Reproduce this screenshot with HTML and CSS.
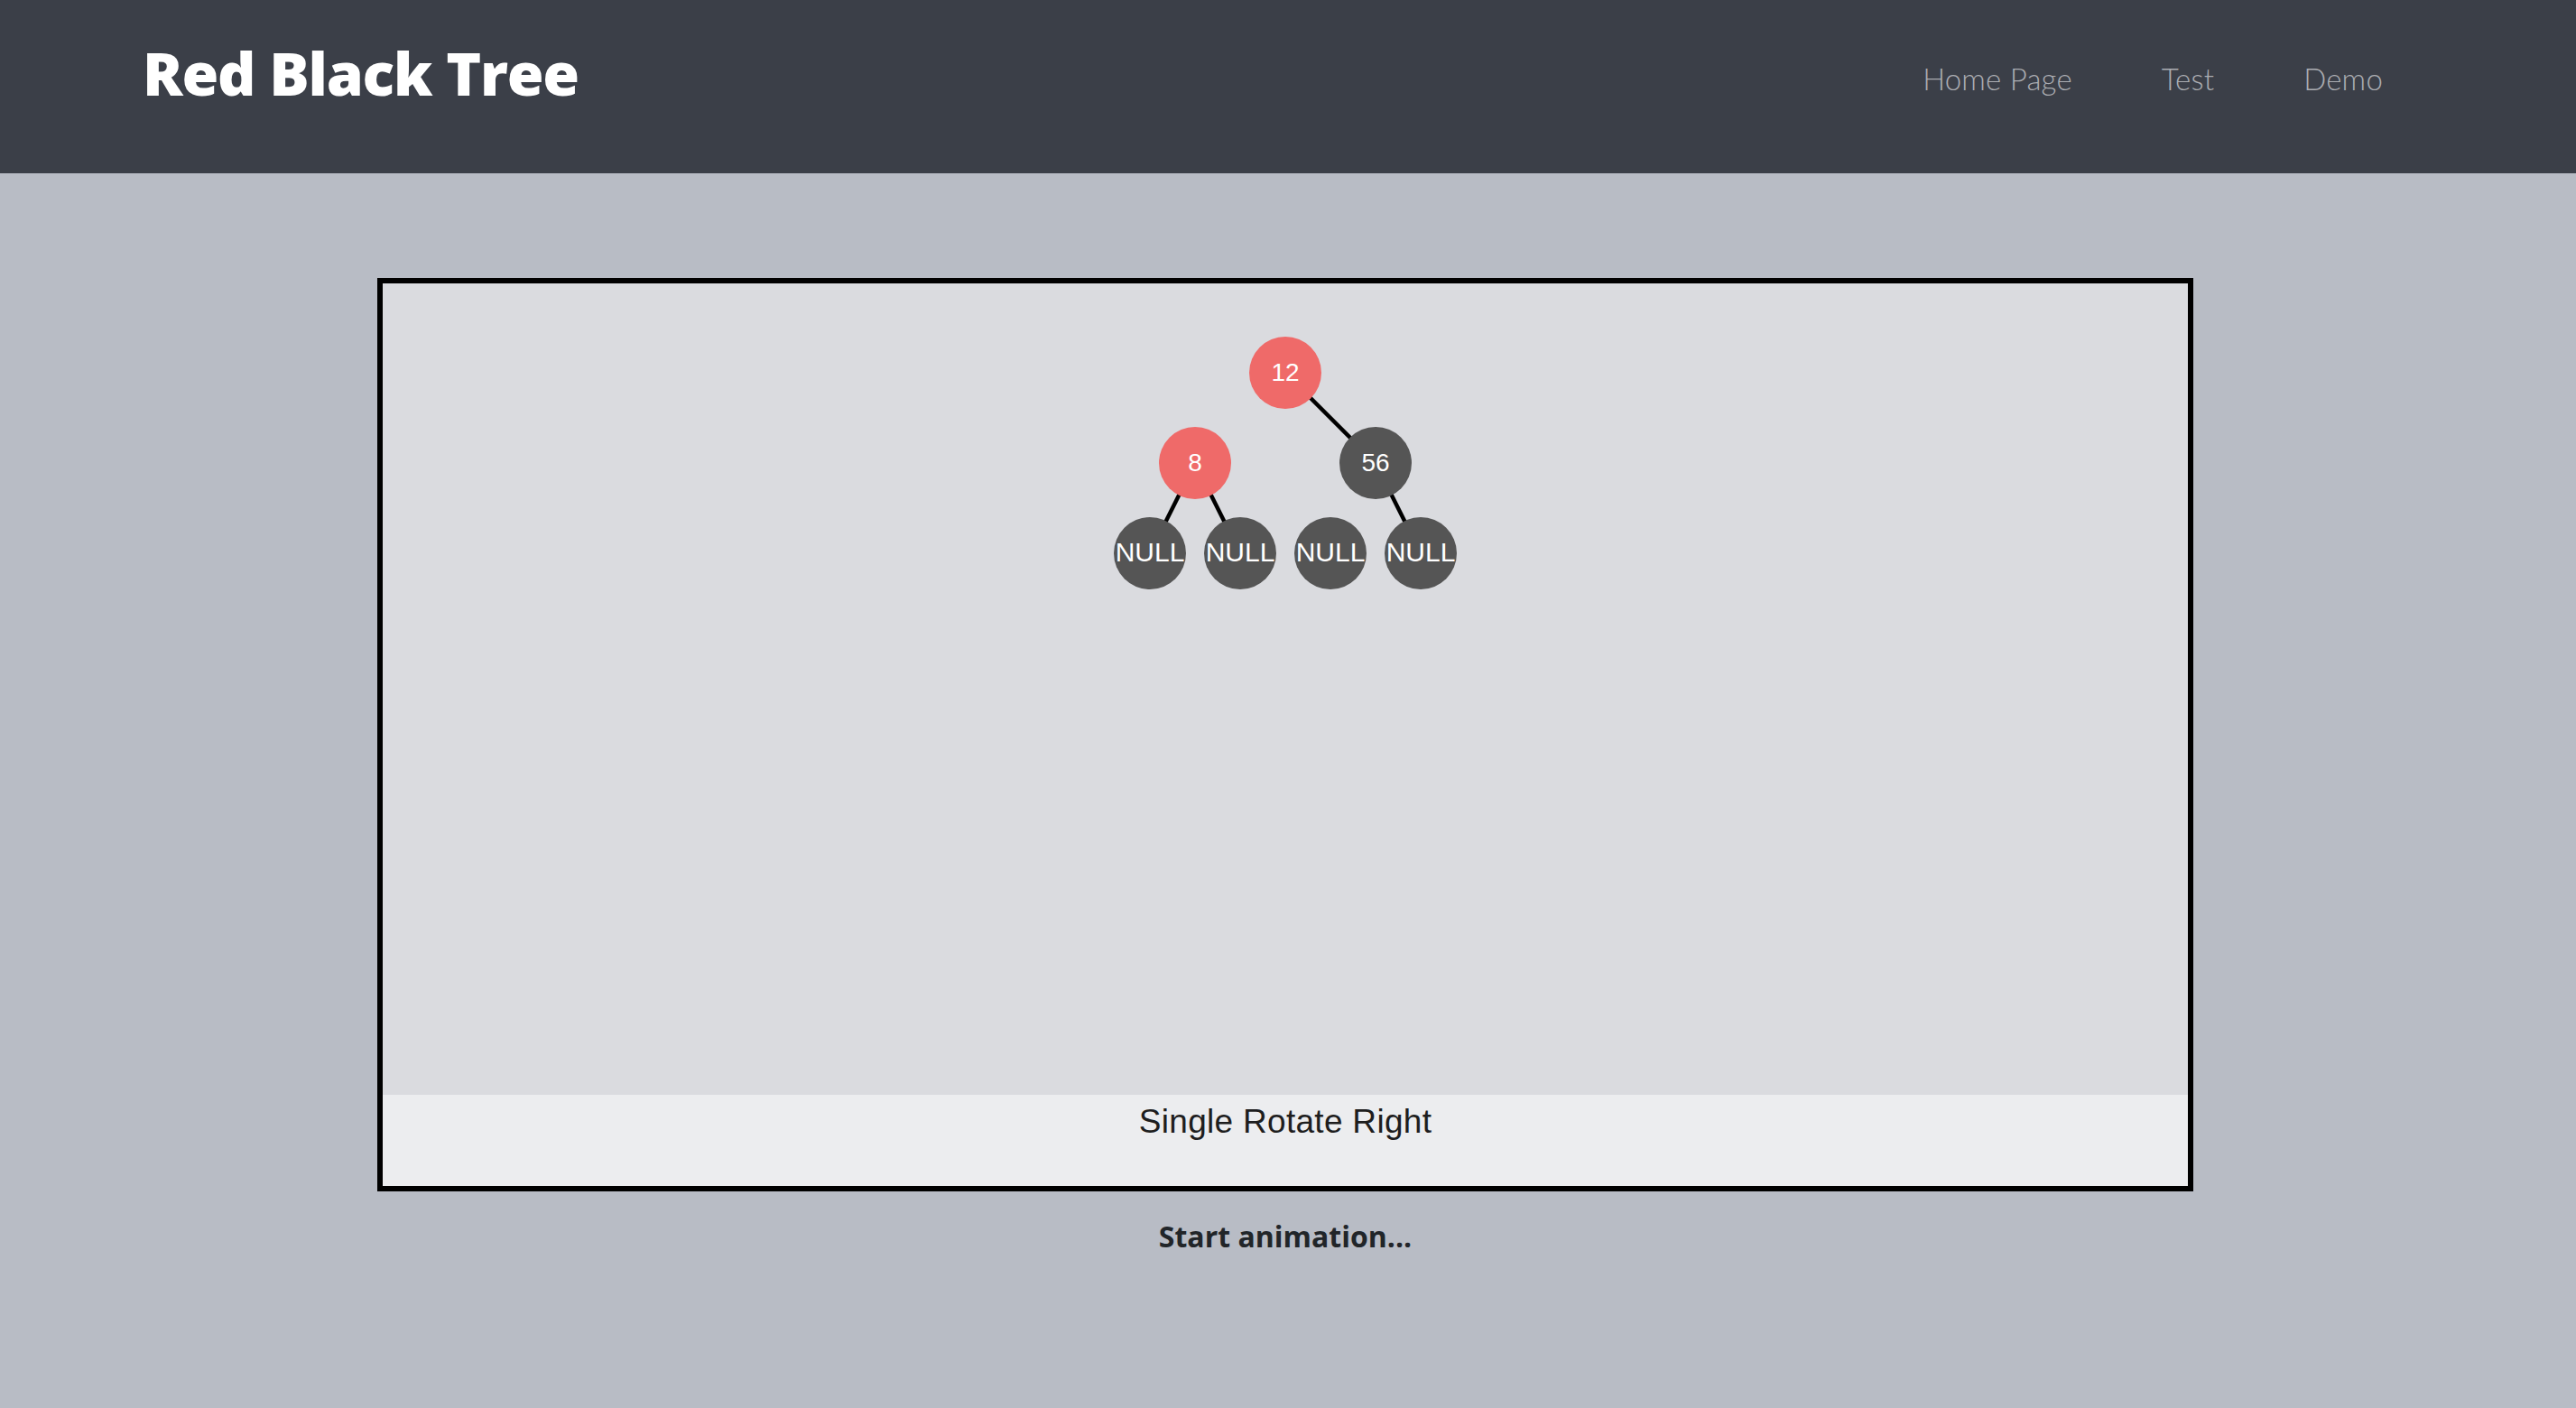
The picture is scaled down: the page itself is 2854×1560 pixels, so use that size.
FILE: index.html
```html
<!DOCTYPE html>
<html>
<head>
<meta charset="utf-8">
<title>Red Black Tree</title>
<link rel="stylesheet" href="styles.css">
</head>
<body>
<header class="topbar">
  <h1 class="brand">Red Black Tree</h1>
  <nav class="nav">
    <a class="nav-link" href="#">Home Page</a>
    <a class="nav-link" href="#">Test</a>
    <a class="nav-link" href="#">Demo</a>
  </nav>
</header>
<main class="content">
  <div class="board">
    <svg class="tree" viewBox="0 0 2000 899" width="2000" height="899">
      <g class="edges">
        <line x1="1000" y1="99" x2="1100" y2="199"/>
        <line x1="900" y1="199" x2="850" y2="299"/>
        <line x1="900" y1="199" x2="950" y2="299"/>
        <line x1="1100" y1="199" x2="1150" y2="299"/>
      </g>
      <g class="node red"><circle cx="1000" cy="99" r="40"/><text x="1000" y="108">12</text></g>
      <g class="node red"><circle cx="900" cy="199" r="40"/><text x="900" y="208">8</text></g>
      <g class="node black"><circle cx="1100" cy="199" r="40"/><text x="1100" y="208">56</text></g>
      <g class="node black"><circle cx="850" cy="299" r="40"/><text class="nil" x="850" y="308">NULL</text></g>
      <g class="node black"><circle cx="950" cy="299" r="40"/><text class="nil" x="950" y="308">NULL</text></g>
      <g class="node black"><circle cx="1050" cy="299" r="40"/><text class="nil" x="1050" y="308">NULL</text></g>
      <g class="node black"><circle cx="1150" cy="299" r="40"/><text class="nil" x="1150" y="308">NULL</text></g>
    </svg>
    <div class="caption">Single Rotate Right</div>
  </div>
  <p class="status">Start animation...</p>
</main>
</body>
</html>
```
FILE: styles.css
```css
html, body {
  margin: 0;
  padding: 0;
}
body {
  background: #b8bcc5;
  min-height: 1560px;
  font-family: "Open Sans", "Liberation Sans", sans-serif;
}
.topbar {
  height: 192px;
  box-sizing: border-box;
  background: #3b3f48;
  display: flex;
  align-items: flex-start;
  justify-content: space-between;
  padding: 47px 214px 0 158px;
}
.brand {
  margin: 0;
  font-family: "Open Sans", sans-serif;
  font-weight: 800;
  font-size: 66px;
  line-height: 66px;
  color: #ffffff;
  letter-spacing: -1.2px;
}
.nav {
  display: flex;
  gap: 99px;
  padding-top: 24px;
}
.nav-link {
  font-family: Lato, "Noto Sans", sans-serif;
  font-weight: 300;
  font-size: 33px;
  line-height: 32px;
  letter-spacing: 0.2px;
  color: #abadb2;
  text-decoration: none;
}
.content {
  width: 2012px;
  margin: 116px 0 0 418px;
}
.board {
  border: 6px solid #000000;
  background: #dadbdf;
  display: flex;
  flex-direction: column;
}
.tree {
  display: block;
  width: 2000px;
  height: 899px;
}
.edges line {
  stroke: #000000;
  stroke-width: 4.5;
}
.node circle {
  stroke: none;
}
.node.red circle {
  fill: #ef6a69;
}
.node.black circle {
  fill: #555555;
}
.node text {
  fill: #ffffff;
  font-family: "Liberation Sans", Arial, sans-serif;
  font-size: 28px;
  text-anchor: middle;
}
.node text.nil {
  font-size: 30px;
}
.caption {
  height: 101px;
  box-sizing: border-box;
  background: #ecedef;
  padding-top: 12px;
  text-align: center;
  font-family: "Liberation Sans", Arial, sans-serif;
  font-size: 37px;
  line-height: 36px;
  letter-spacing: 0.3px;
  color: #1e1e1e;
}
.status {
  margin: 34px 0 0 0;
  text-align: center;
  font-family: "Open Sans", sans-serif;
  font-weight: 700;
  font-size: 32px;
  line-height: 32px;
  color: #212529;
}
```
